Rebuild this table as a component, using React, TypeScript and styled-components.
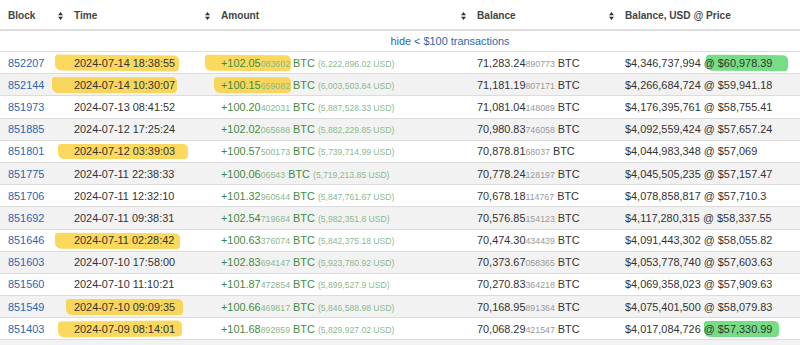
import React from 'react';
import styled, { createGlobalStyle } from 'styled-components';

const Global = createGlobalStyle`
  html, body { margin: 0; padding: 0; background: #fff; overflow: hidden; }
  body { font-family: "Liberation Sans", Arial, sans-serif; }
`;

const Page = styled.div`
  width: 800px;
  height: 345px;
  overflow: hidden;
`;

const Table = styled.table`
  width: 900px;
  table-layout: fixed;
  border-collapse: separate;
  border-spacing: 0;
  font-size: 10.9px;
  color: #333;
`;

const HeadCell = styled.th`
  box-sizing: border-box;
  height: 31px;
  padding: 2px 0 0 8px;
  border-bottom: 2px solid #dcdcdc;
  text-align: left;
  font-weight: bold;
  font-size: 10.1px;
  color: #444;
`;

const HeadInner = styled.div`
  display: flex;
  align-items: center;
  justify-content: space-between;
  padding-right: 3.5px;
`;

const ToggleCell = styled.td`
  box-sizing: border-box;
  height: 20px;
  text-align: center;
  padding: 0;
`;

const Link = styled.a`
  color: #2c66b0;
  text-decoration: none;
`;

const Row = styled.tr<{ $striped: boolean }>`
  background: ${(p) => (p.$striped ? '#f2f2f2' : '#fff')};
`;

const Cell = styled.td`
  box-sizing: border-box;
  height: 22.2px;
  padding: 0 0 0 8px;
  border-top: 1px solid #dcdcdc;
  white-space: nowrap;
  overflow: visible;
`;

const Mark = styled.span<{ $tone: 'yellow' | 'green'; $l: number; $r: number; $rot: number }>`
  position: relative;
  z-index: 0;
  &::before {
    content: '';
    position: absolute;
    z-index: -1;
    left: ${(p) => -p.$l}px;
    right: ${(p) => -p.$r}px;
    top: -1.5px;
    bottom: -2px;
    background: ${(p) => (p.$tone === 'yellow' ? 'rgba(248, 202, 32, 0.72)' : 'rgba(66, 208, 86, 0.72)')};
    border-radius: 3px 5px 4px 6px;
    transform: rotate(${(p) => p.$rot}deg);
  }
`;

const Plus = styled.span`
  color: #3f8c3f;
`;

const Frac = styled.span<{ $tone: 'green' | 'gray' }>`
  font-size: 8.8px;
  color: ${(p) => (p.$tone === 'green' ? '#8cb88c' : '#9a9a9a')};
`;

const Btc = styled.span<{ $tone: 'green' | 'dark' }>`
  color: ${(p) => (p.$tone === 'green' ? '#3f8c3f' : '#333')};
`;

const Usd = styled.span`
  font-size: 8.6px;
  color: #8dba8d;
`;

const SortIcon = () => (
  <svg width="5" height="8" viewBox="0 0 5 8" aria-hidden="true">
    <polygon points="0,3.3 2.5,0 5,3.3" fill="#333" />
    <polygon points="0,4.7 2.5,8 5,4.7" fill="#333" />
  </svg>
);

type HL = { l: number; r: number; rot: number };
type Rec = {
  block: string;
  time: string;
  amt: string;
  amtFrac: string;
  usd: string;
  bal: string;
  balFrac: string;
  usdBal: string;
  price: string;
  timeHL?: HL;
  amtHL?: HL;
  priceHL?: HL;
};

const rows: Rec[] = [
  { block: '852207', time: '2024-07-14 18:38:55', amt: '+102.05', amtFrac: '083602', usd: '6,222,896.02', bal: '71,283.24', balFrac: '890773', usdBal: '$4,346,737,994', price: '$60,978.39', timeHL: { l: 19, r: 4, rot: 0.4 }, amtHL: { l: 16, r: 1, rot: 0.3 }, priceHL: { l: -2, r: 15, rot: 0.3 } },
  { block: '852144', time: '2024-07-14 10:30:07', amt: '+100.15', amtFrac: '659082', usd: '6,003,503.84', bal: '71,181.19', balFrac: '807171', usdBal: '$4,266,684,724', price: '$59,941.18', timeHL: { l: 22, r: 2, rot: 0 }, amtHL: { l: 7, r: 1, rot: 0 } },
  { block: '851973', time: '2024-07-13 08:41:52', amt: '+100.20', amtFrac: '402031', usd: '5,887,528.33', bal: '71,081.04', balFrac: '148089', usdBal: '$4,176,395,761', price: '$58,755.41' },
  { block: '851885', time: '2024-07-12 17:25:24', amt: '+102.02', amtFrac: '065688', usd: '5,882,229.85', bal: '70,980.83', balFrac: '746058', usdBal: '$4,092,559,424', price: '$57,657.24' },
  { block: '851801', time: '2024-07-12 03:39:03', amt: '+100.57', amtFrac: '500173', usd: '5,739,714.99', bal: '70,878.81', balFrac: '68037', usdBal: '$4,044,983,348', price: '$57,069', timeHL: { l: 16, r: 13, rot: 0 } },
  { block: '851775', time: '2024-07-11 22:38:33', amt: '+100.06', amtFrac: '06543', usd: '5,719,213.85', bal: '70,778.24', balFrac: '128197', usdBal: '$4,045,505,235', price: '$57,157.47' },
  { block: '851706', time: '2024-07-11 12:32:10', amt: '+101.32', amtFrac: '960644', usd: '5,847,761.67', bal: '70,678.18', balFrac: '114767', usdBal: '$4,078,858,817', price: '$57,710.3' },
  { block: '851692', time: '2024-07-11 09:38:31', amt: '+102.54', amtFrac: '719684', usd: '5,982,351.8', bal: '70,576.85', balFrac: '154123', usdBal: '$4,117,280,315', price: '$58,337.55' },
  { block: '851646', time: '2024-07-11 02:28:42', amt: '+100.63', amtFrac: '376074', usd: '5,842,375.18', bal: '70,474.30', balFrac: '434439', usdBal: '$4,091,443,302', price: '$58,055.82', timeHL: { l: 19, r: 6, rot: 0.3 } },
  { block: '851603', time: '2024-07-10 17:58:00', amt: '+102.83', amtFrac: '694147', usd: '5,923,780.92', bal: '70,373.67', balFrac: '058365', usdBal: '$4,053,778,740', price: '$57,603.63' },
  { block: '851560', time: '2024-07-10 11:10:21', amt: '+101.87', amtFrac: '472854', usd: '5,899,527.9', bal: '70,270.83', balFrac: '364218', usdBal: '$4,069,358,023', price: '$57,909.63' },
  { block: '851549', time: '2024-07-10 09:09:35', amt: '+100.66', amtFrac: '469817', usd: '5,846,588.98', bal: '70,168.95', balFrac: '891364', usdBal: '$4,075,401,500', price: '$58,079.83', timeHL: { l: 8, r: 8, rot: 0 } },
  { block: '851403', time: '2024-07-09 08:14:01', amt: '+101.68', amtFrac: '892859', usd: '5,829,927.02', bal: '70,068.29', balFrac: '421547', usdBal: '$4,017,084,726', price: '$57,330.99', timeHL: { l: 16, r: 7, rot: -0.6 }, priceHL: { l: 0, r: 7, rot: 0 } },
];

const wrap = (hl: HL | undefined, tone: 'yellow' | 'green', node: React.ReactNode) =>
  hl ? (
    <Mark $tone={tone} $l={hl.l} $r={hl.r} $rot={hl.rot}>
      {node}
    </Mark>
  ) : (
    node
  );

const headers = ['Block', 'Time', 'Amount', 'Balance', 'Balance, USD @ Price'];
const widths = [66, 147, 256, 148, 283];

export default function App() {
  return (
    <Page>
      <Global />
      <Table>
        <colgroup>
          {widths.map((w, i) => (
            <col key={i} style={{ width: w }} />
          ))}
        </colgroup>
        <thead>
          <tr>
            {headers.map((h) => (
              <HeadCell key={h}>
                <HeadInner>
                  <span>{h}</span>
                  <SortIcon />
                </HeadInner>
              </HeadCell>
            ))}
          </tr>
        </thead>
        <tbody>
          <tr>
            <ToggleCell colSpan={5}>
              <Link href="#">hide &lt; $100 transactions</Link>
            </ToggleCell>
          </tr>
          {rows.map((r, i) => (
            <Row key={r.block} $striped={i % 2 === 1}>
              <Cell>
                <Link href="#">{r.block}</Link>
              </Cell>
              <Cell>{wrap(r.timeHL, 'yellow', r.time)}</Cell>
              <Cell>
                {wrap(
                  r.amtHL,
                  'yellow',
                  <Plus>
                    {r.amt}
                    <Frac $tone="green">{r.amtFrac}</Frac>
                  </Plus>
                )}{' '}
                <Btc $tone="green">BTC</Btc> <Usd>({r.usd} USD)</Usd>
              </Cell>
              <Cell>
                {r.bal}
                <Frac $tone="gray">{r.balFrac}</Frac> <Btc $tone="dark">BTC</Btc>
              </Cell>
              <Cell>
                {r.usdBal} {wrap(r.priceHL, 'green', `@ ${r.price}`)}
              </Cell>
            </Row>
          ))}
          <Row $striped={true}>
            <Cell colSpan={5} />
          </Row>
        </tbody>
      </Table>
    </Page>
  );
}
